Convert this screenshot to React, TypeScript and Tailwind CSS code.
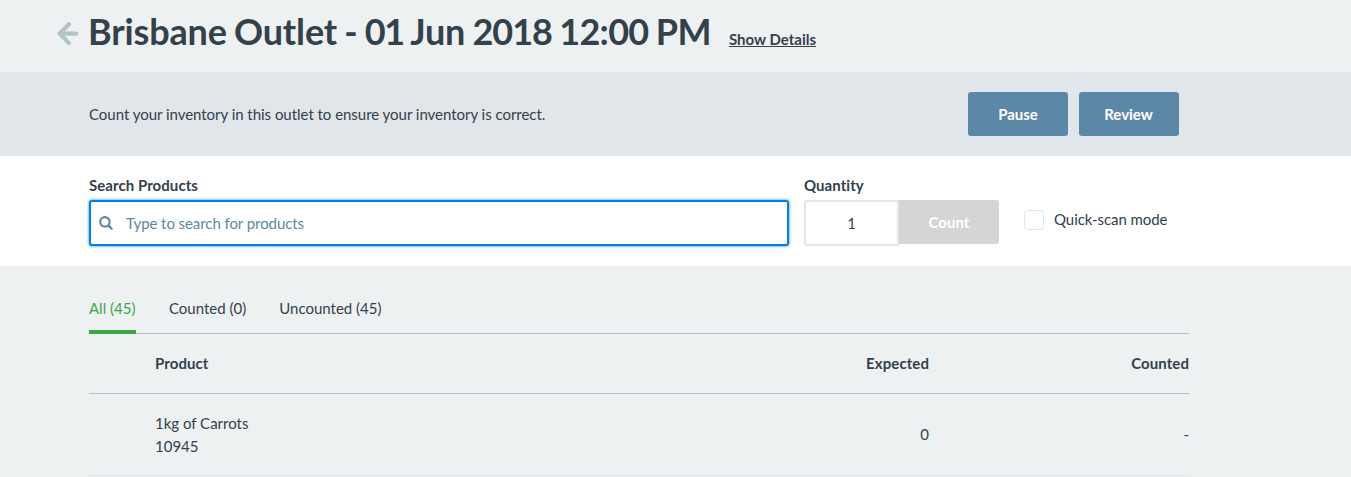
import React from "react";

const tabs = [
  { label: "All (45)", active: true },
  { label: "Counted (0)", active: false },
  { label: "Uncounted (45)", active: false },
];

const rows = [{ name: "1kg of Carrots", sku: "10945", expected: "0", counted: "-" }];

function BackArrow() {
  return (
    <svg className="mt-[22px] ml-[57px] h-6 w-[22px] shrink-0" viewBox="0 0 22 24" fill="none" stroke="#b3c4c9" strokeWidth="4.2" strokeLinecap="round" strokeLinejoin="round">
      <path d="M11.9 2.2 L2.6 11.6 L11.9 21 M3 11.6 H19.2" />
    </svg>
  );
}

function SearchIcon() {
  return (
    <svg className="h-[14px] w-[14px] shrink-0" viewBox="0 0 14 14" fill="none" stroke="#5c88a7" strokeWidth="2.2" strokeLinecap="round">
      <circle cx="5.9" cy="5.9" r="4.7" />
      <path d="M9.6 9.6 L12.7 12.7" />
    </svg>
  );
}

export default function App() {
  return (
    <div className="h-[477px] w-full overflow-hidden bg-[#edf1f2] font-['Lato',sans-serif] text-[15px] leading-[23px] text-[#33414b]">
      <header className="flex h-[72px] items-start">
        <BackArrow />
        <h1 className="ml-[9px] mt-[9px] w-[624px] text-[36px] font-bold leading-[44px] tracking-[-0.15px] [word-spacing:-1.4px] whitespace-nowrap">
          Brisbane Outlet - <span className="tracking-[-1.25px]">01</span> Jun{" "}
          <span className="tracking-[-1px]">2018</span>{" "}
          <span className="tracking-[-0.7px]">12:00</span> <span className="tracking-[-0.5px]">PM</span>
        </h1>
        <a href="#details" className="ml-[17px] mt-[28px] font-bold underline">Show Details</a>
      </header>

      <section className="flex h-[84px] items-center bg-[#e1e6ea] pl-[89px]">
        <p className="w-[879px] tracking-[-0.03px]">Count your inventory in this outlet to ensure your inventory is correct.</p>
        <div className="flex gap-[11px] font-bold text-white">
          <button className="h-11 w-[100px] rounded-[3px] bg-[#5c88a7]">Pause</button>
          <button className="h-11 w-[100px] rounded-[3px] bg-[#5c88a7] pr-px">Review</button>
        </div>
      </section>

      <section className="flex h-[110px] bg-white pt-[18px] pl-[89px]">
        <div className="w-[700px]">
          <label className="block h-[26px] font-bold tracking-[0.06px]">Search Products</label>
          <div className="flex h-[46px] items-center rounded-[3px] border-2 border-[#0080e8] bg-white pl-2 shadow-[0_0_3px_#0080e8]">
            <SearchIcon />
            <input className="ml-[13px] min-w-0 flex-1 tracking-[-0.07px] outline-none placeholder:text-[#5c88a7]" placeholder="Type to search for products" />
          </div>
        </div>
        <div className="ml-[15px] w-[195px]">
          <label className="block h-[26px] font-bold tracking-[0.06px]">Quantity</label>
          <div className="flex items-start">
            <input className="h-[46px] w-[95px] rounded-l-[3px] border-2 border-[#e1e6ea] text-center outline-none" defaultValue="1" />
            <button className="h-11 w-[100px] rounded-r-[3px] bg-[#d5d5d5] font-bold text-white">Count</button>
          </div>
        </div>
        <label className="mt-[36px] ml-[25px] flex h-5 items-center gap-[10px] tracking-[-0.06px]">
          <span className="h-5 w-5 rounded-[3px] border border-[#e1e6ea] bg-white" />
          <span className="-mt-px">Quick-scan mode</span>
        </label>
      </section>

      <main className="ml-[89px] w-[1100px]">
        <nav className="flex h-[68px] gap-[33px] border-b border-[#b3c4c9] pt-[31px]">
          {tabs.map((tab) => (
            <div key={tab.label} className={tab.active ? "h-[37px] w-[47px] border-b-4 border-[#3aa843] text-[#3aa843]" : "h-[37px]"}>
              {tab.label}
            </div>
          ))}
        </nav>
        <table className="w-full table-fixed border-separate border-spacing-0">
          <colgroup>
            <col className="w-[66px]" />
            <col className="w-[514px]" />
            <col className="w-[260px]" />
            <col className="w-[260px]" />
          </colgroup>
          <thead>
            <tr className="h-[60px] tracking-[0.08px]">
              <th className="border-b border-[#b3c4c9]" />
              <th className="border-b border-[#b3c4c9] text-left">Product</th>
              <th className="border-b border-[#b3c4c9] text-right">Expected</th>
              <th className="border-b border-[#b3c4c9] text-right">Counted</th>
            </tr>
          </thead>
          <tbody>
            {rows.map((row) => (
              <tr key={row.sku} className="h-[82px]">
                <td className="border-b border-[#e1e6ea]" />
                <td className="border-b border-[#e1e6ea]">
                  <div>{row.name}</div>
                  <div>{row.sku}</div>
                </td>
                <td className="border-b border-[#e1e6ea] text-right">{row.expected}</td>
                <td className="border-b border-[#e1e6ea] text-right">{row.counted}</td>
              </tr>
            ))}
          </tbody>
        </table>
      </main>
    </div>
  );
}
